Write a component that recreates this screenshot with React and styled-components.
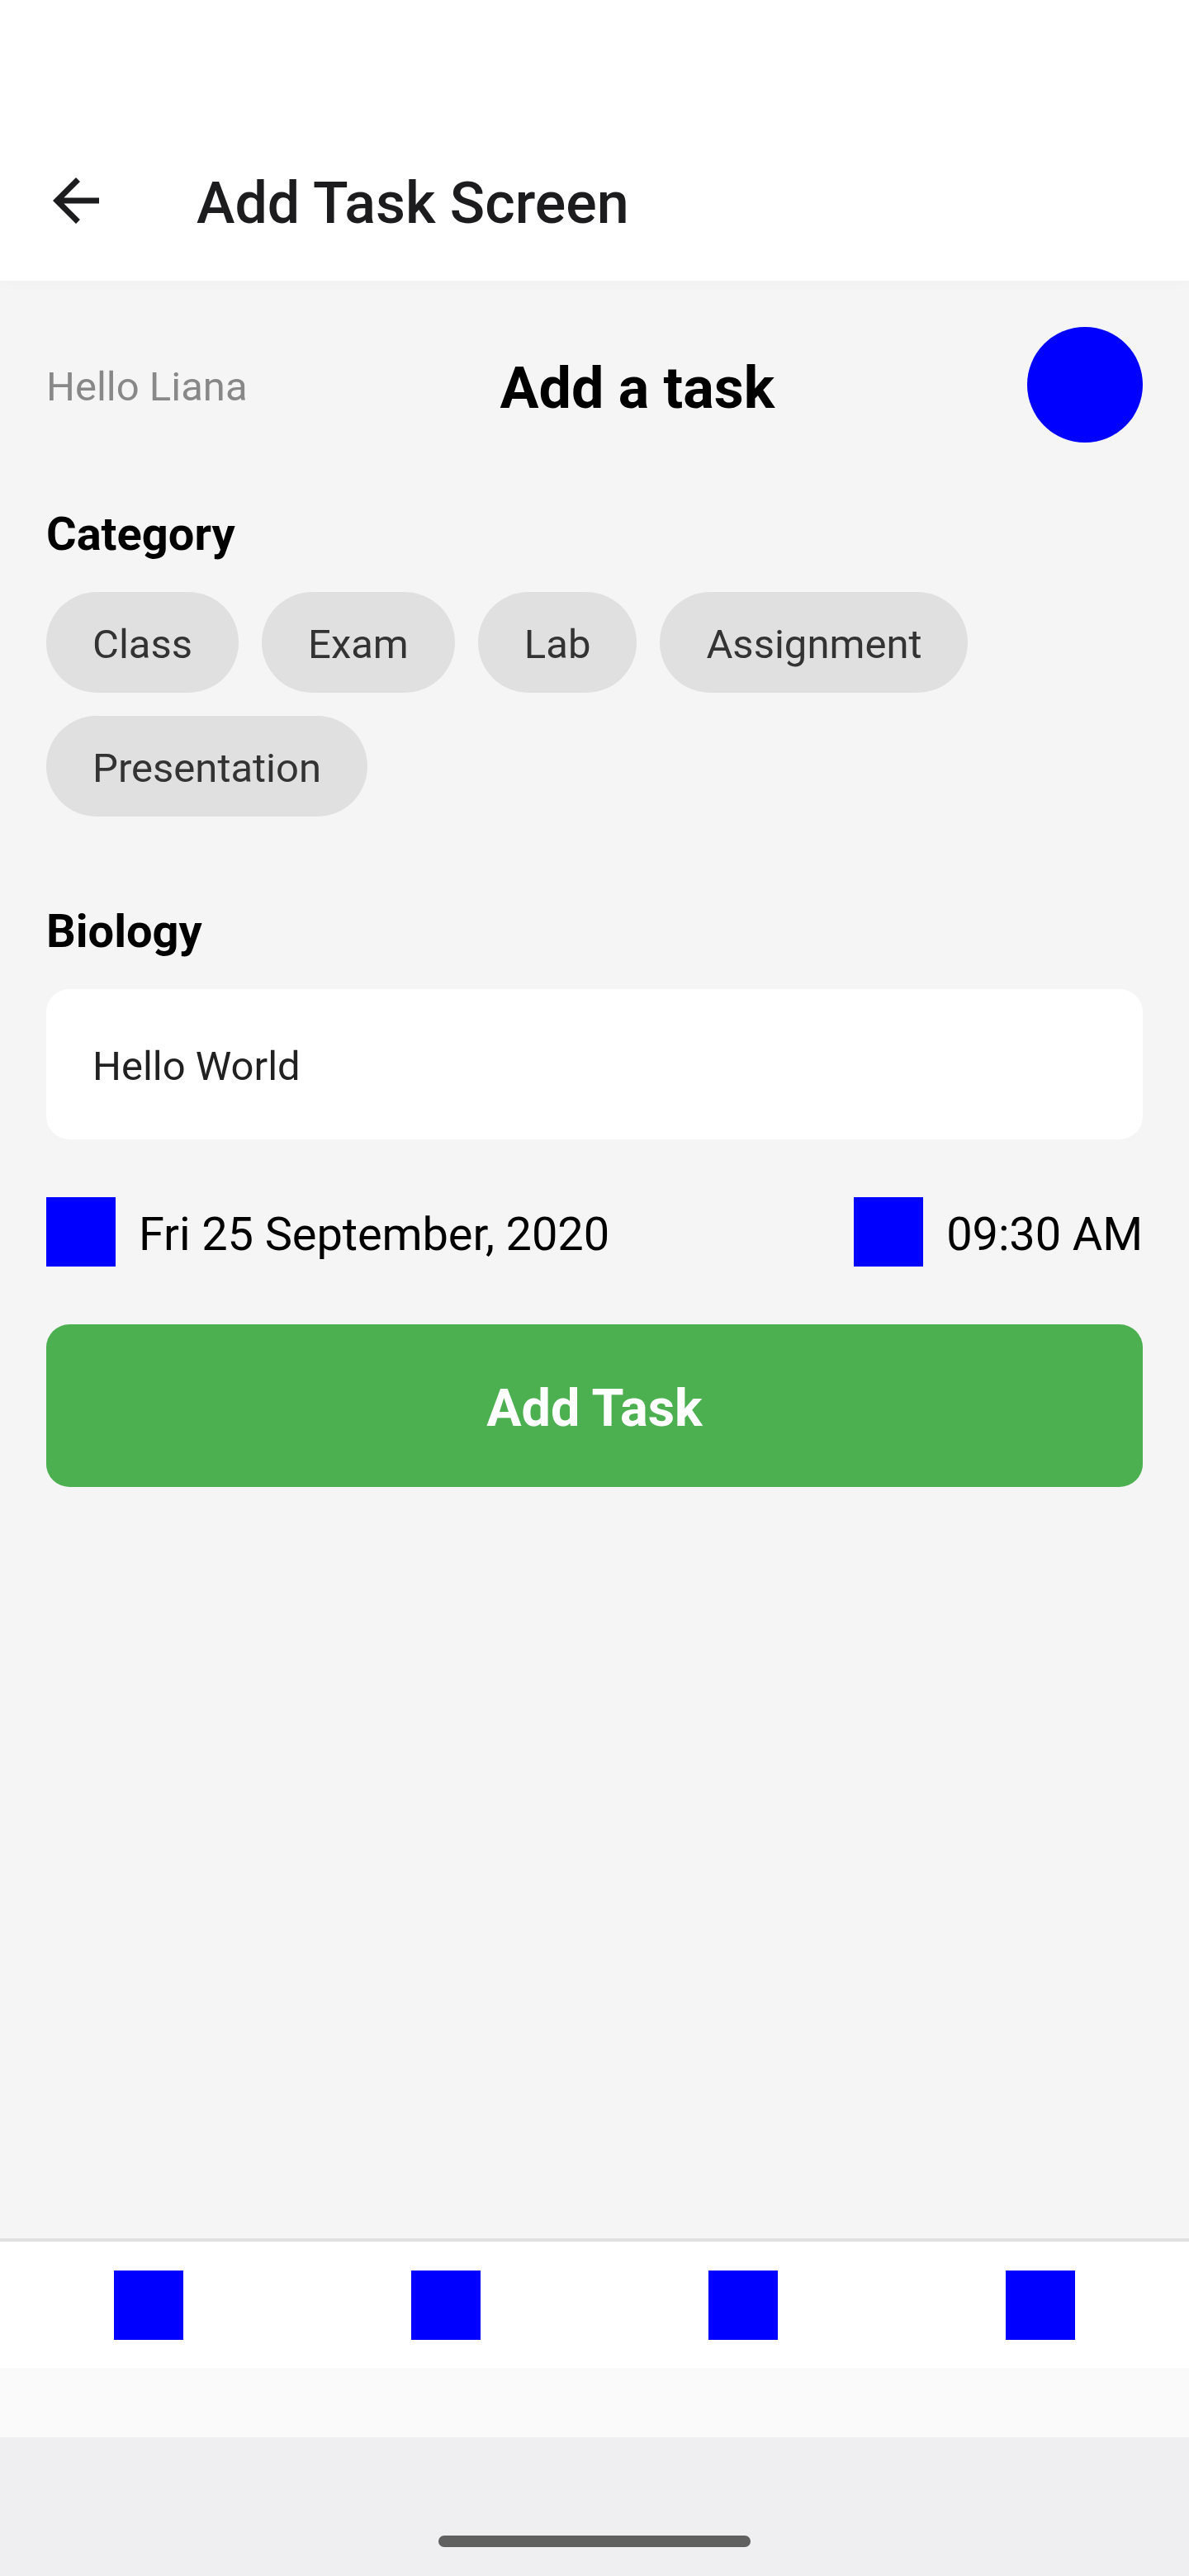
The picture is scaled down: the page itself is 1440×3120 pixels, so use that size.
import React from "react";
import styled, { createGlobalStyle } from "styled-components";

const GlobalStyle = createGlobalStyle`
  *, *::before, *::after { box-sizing: border-box; }
  html, body { margin: 0; padding: 0; }
  body {
    font-family: Roboto, "Noto Sans", sans-serif;
    color: #000;
    background: #f5f5f5;
  }
`;

const Screen = styled.div`
  width: 1440px;
  height: 3120px;
  display: flex;
  flex-direction: column;
  overflow: hidden;
  background: #f5f5f5;
`;

const AppBar = styled.header`
  height: 340px;
  flex: none;
  display: flex;
  align-items: center;
  gap: 104px;
  padding: 146px 50px 0;
  background: #fff;
  box-shadow: 0 4px 16px rgba(0, 0, 0, 0.02);
`;

const BackButton = styled.button`
  width: 84px;
  height: 84px;
  padding: 0;
  border: 0;
  background: none;
  color: #1c1c1e;

  svg {
    display: block;
    width: 84px;
    height: 84px;
  }
`;

const AppBarTitle = styled.h1`
  margin: 0;
  padding-top: 6px;
  font-size: 70px;
  font-weight: 500;
  line-height: 94px;
  color: #1c1c1e;
`;

const Content = styled.main`
  flex: 1;
  display: flex;
  flex-direction: column;
  padding: 56px 56px 0;
`;

const GreetingRow = styled.section`
  height: 140px;
  display: flex;
  align-items: center;
  justify-content: space-between;
`;

const Greeting = styled.span`
  padding-top: 5px;
  font-size: 49px;
  line-height: 67px;
  color: #888;
`;

const PageTitle = styled.h2`
  margin: 0;
  padding-top: 8px;
  font-size: 70px;
  font-weight: 700;
  line-height: 94px;
`;

const Avatar = styled.div`
  width: 140px;
  height: 140px;
  border-radius: 50%;
  background: #00f;
`;

const Section = styled.section`
  display: flex;
  flex-direction: column;
  gap: 28px;
  margin-top: ${({ $top }) => $top}px;
`;

const SectionTitle = styled.h3`
  margin: 0;
  height: 80px;
  font-size: 56px;
  font-weight: 700;
  line-height: 76px;
`;

const ChipList = styled.div`
  display: flex;
  flex-wrap: wrap;
  gap: 28px;
`;

const Chip = styled.button`
  height: 122px;
  padding: 5px 56px 0;
  border: 0;
  border-radius: 70px;
  background: #e0e0e0;
  color: #333;
  font: 400 49px/67px Roboto, "Noto Sans", sans-serif;
`;

const TaskInput = styled.input`
  width: 100%;
  height: 182px;
  padding: 5px 56px 0;
  border: 0;
  border-radius: 28px;
  outline: 0;
  background: #fff;
  color: #212121;
  font: 400 49px/67px Roboto, "Noto Sans", sans-serif;
`;

const ScheduleRow = styled.section`
  display: flex;
  justify-content: space-between;
  margin-top: 70px;
`;

const ScheduleItem = styled.div`
  display: flex;
  align-items: center;
  gap: 28px;
  height: 84px;
`;

const ScheduleText = styled.span`
  padding-top: 6px;
  font-size: 56px;
  line-height: 76px;
  letter-spacing: -0.12px;
`;

const IconBlock = styled.div`
  width: 84px;
  height: 84px;
  flex: none;
  background: #00f;
`;

const SubmitButton = styled.button`
  height: 197px;
  margin-top: 70px;
  padding: 6px 0 0;
  border: 0;
  border-radius: 28px;
  background: #4caf50;
  color: #fff;
  font: 700 63px/85px Roboto, "Noto Sans", sans-serif;
`;

const TabBar = styled.nav`
  flex: none;
  display: grid;
  grid-template-columns: repeat(4, 1fr);
  justify-items: center;
  height: 157px;
  padding-top: 35px;
  border-top: 4px solid #e0e0e0;
  background: #fff;
`;

const BottomInset = styled.div`
  flex: none;
  height: 84px;
  background: #fafafa;
`;

const SystemBar = styled.footer`
  flex: none;
  display: flex;
  justify-content: center;
  align-items: flex-end;
  height: 168px;
  padding-bottom: 35px;
  background: #efeff1;
`;

const HomeHandle = styled.div`
  width: 378px;
  height: 14px;
  border-radius: 7px;
  background: #606060;
`;

const categories = ["Class", "Exam", "Lab", "Assignment", "Presentation"];
const tabs = ["home", "calendar", "tasks", "profile"];

function ArrowBack() {
  return (
    <svg viewBox="0 0 24 24" fill="currentColor" aria-hidden="true">
      <path d="M20 11H7.83l5.59-5.59L12 4l-8 8 8 8 1.41-1.41L7.83 13H20v-2z" />
    </svg>
  );
}

function Schedule({ children }) {
  return (
    <ScheduleItem>
      <IconBlock />
      <ScheduleText>{children}</ScheduleText>
    </ScheduleItem>
  );
}

export default function App() {
  return (
    <>
      <GlobalStyle />
      <Screen>
        <AppBar>
          <BackButton>
            <ArrowBack />
          </BackButton>
          <AppBarTitle>Add Task Screen</AppBarTitle>
        </AppBar>
        <Content>
          <GreetingRow>
            <Greeting>Hello Liana</Greeting>
            <PageTitle>Add a task</PageTitle>
            <Avatar />
          </GreetingRow>
          <Section $top={73}>
            <SectionTitle>Category</SectionTitle>
            <ChipList>
              {categories.map((name) => (
                <Chip key={name}>{name}</Chip>
              ))}
            </ChipList>
          </Section>
          <Section $top={101}>
            <SectionTitle>Biology</SectionTitle>
            <TaskInput defaultValue="Hello World" />
          </Section>
          <ScheduleRow>
            <Schedule>Fri 25 September, 2020</Schedule>
            <Schedule>09:30 AM</Schedule>
          </ScheduleRow>
          <SubmitButton>Add Task</SubmitButton>
        </Content>
        <TabBar>
          {tabs.map((tab) => (
            <IconBlock key={tab} />
          ))}
        </TabBar>
        <BottomInset />
        <SystemBar>
          <HomeHandle />
        </SystemBar>
      </Screen>
    </>
  );
}
